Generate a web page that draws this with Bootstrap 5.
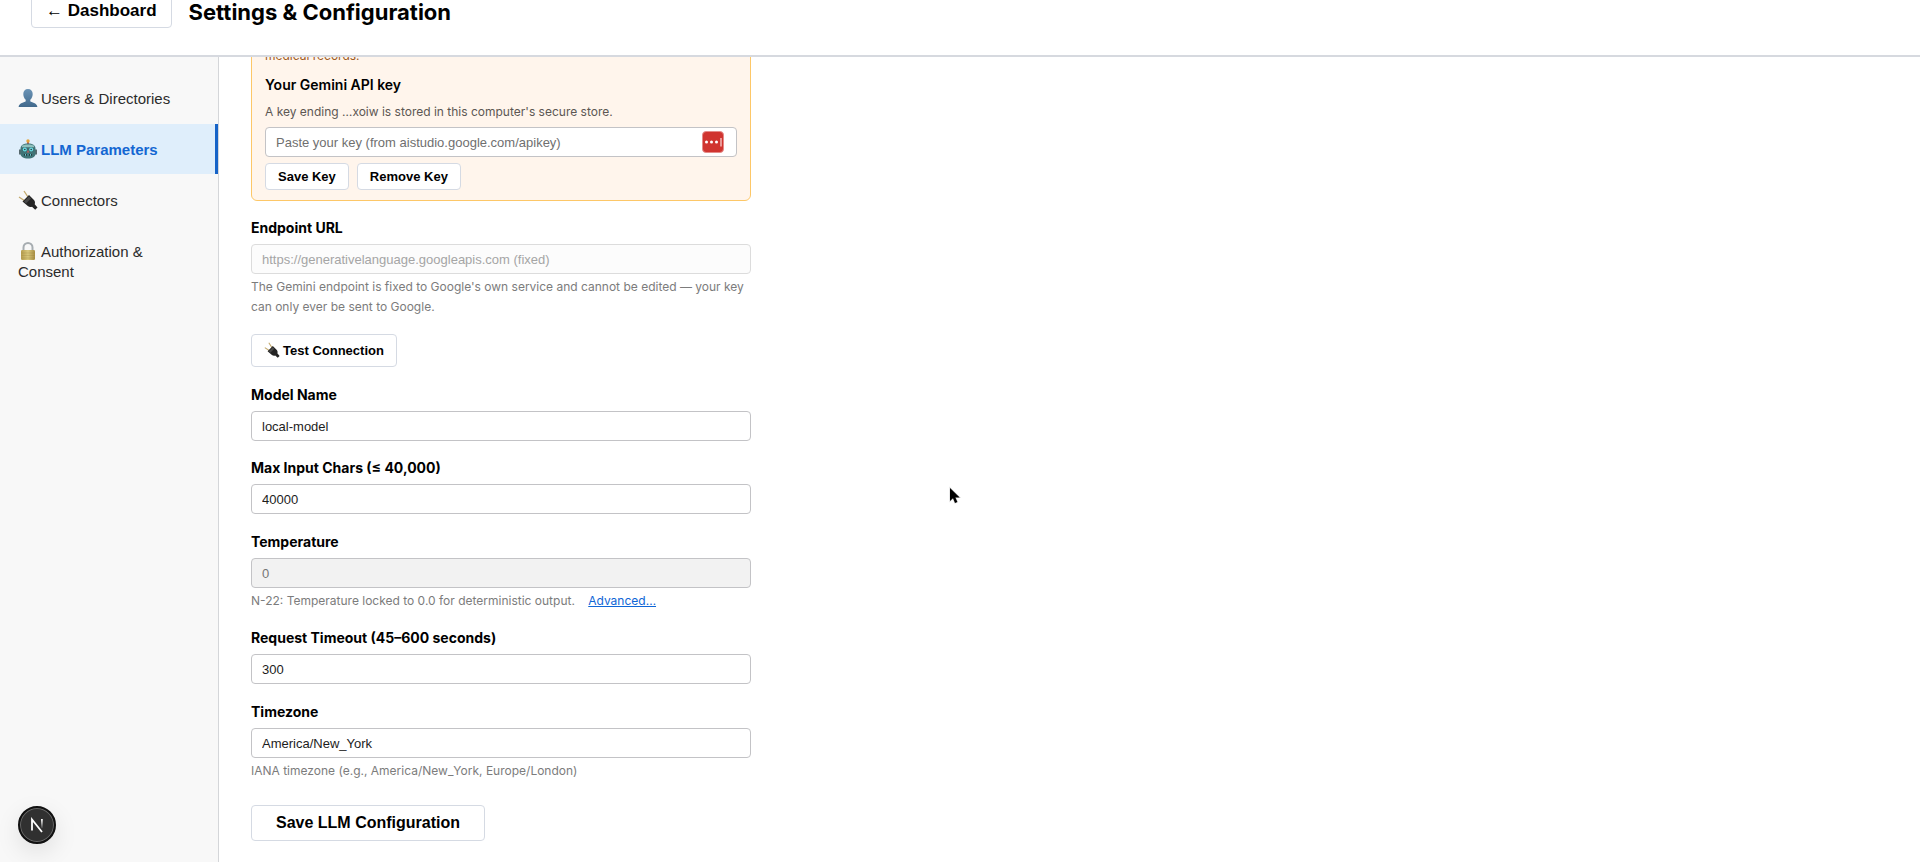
<!DOCTYPE html>
<html lang="en">
<head>
<meta charset="utf-8">
<meta name="viewport" content="width=device-width, initial-scale=1">
<title>Settings &amp; Configuration</title>
<link href="https://cdn.jsdelivr.net/npm/bootstrap@5.3.0/dist/css/bootstrap.min.css" rel="stylesheet">
<style>
  :root { --ui: Inter, "Liberation Sans", sans-serif; --control: "Liberation Sans", Arial, sans-serif; }
  body { font-family: var(--ui); font-size: 12px; line-height: 20px; color: #000; background: #fff; overflow: hidden; }
  .topbar { height: 57px; padding: 0 31px 27px; gap: 17px; border-bottom: 2px solid #d6d9df; z-index: 2; }
  .topbar h1 { font-size: 22px; line-height: 24px; font-weight: 700; margin-bottom: 4px; }
  .btn { --bs-btn-color: #000; --bs-btn-bg: #fff; --bs-btn-border-color: #d5dae3; --bs-btn-border-radius: 4px; --bs-btn-font-weight: 700; --bs-btn-font-family: var(--control); --bs-btn-hover-color: #000; --bs-btn-hover-bg: #f4f5f7; --bs-btn-hover-border-color: #c5cad3; }
  .btn-big { --bs-btn-font-size: 16px; --bs-btn-line-height: 20px; --bs-btn-padding-x: 24px; --bs-btn-padding-y: 7px; }
  .btn-back { --bs-btn-font-size: 17px; --bs-btn-padding-x: 14px; --bs-btn-padding-y: 6px; }
  .btn-key { --bs-btn-font-size: 13px; --bs-btn-line-height: 19px; --bs-btn-padding-x: 12px; --bs-btn-padding-y: 3px; }
  .btn-test { --bs-btn-font-size: 13px; --bs-btn-line-height: 19px; --bs-btn-padding-x: 12px; --bs-btn-padding-y: 6px; }
  .sidebar { width: 219px; padding-top: 16px; gap: 1px; background: #f8f8f8; border-right: 1px solid #d4d6d9; }
  .sidebar .nav-link { font-family: var(--control); font-size: 15px; line-height: 20px; padding: 16px 18px 14px; color: #2b2b2b; border-right: 3px solid transparent; }
  .sidebar .nav-link.active { color: #1467d2; font-weight: 700; background: #dfeefb; border-right-color: #1663c7; }
  .emo { width: 20px; height: 20px; margin: -3px 3px -3px 0; vertical-align: -1px; }
  .btn .emo { width: 16px; height: 16px; vertical-align: 0; }
  .panel { padding-left: 32px; padding-right: 32px; margin-top: -26px; }
  .settings-form { max-width: 500px; }
  .keybox { padding: 14px 13px 10px; background: #fff5ec; border: 1px solid #fdc767; border-radius: 6px; margin-bottom: 17px; }
  .warn { color: #a05a1c; margin-bottom: 9px; }
  .form-label { display: block; font-size: 14px; line-height: 20px; font-weight: 700; margin-bottom: 6px; }
  .keybox .form-label { font-weight: 600; }
  .form-control { font-family: var(--control); font-size: 13px; line-height: 18px; height: 30px; padding: 5px 10px; color: #1c1c1c; border-color: #c3c3c6; border-radius: 4px; }
  .form-control::placeholder { color: #6f6f6f; opacity: 1; }
  .form-control:disabled { background: #f2f2f2; color: #757575; }
  .form-control.fixed-url:disabled { background: #fcfcfc; color: #a5a5a5; border-color: #dcdcdc; }
  .field { margin-bottom: 18px; }
  .field-tight { margin-bottom: 17px; }
  .form-text { font-size: 12px; line-height: 20px; margin-top: 3px; color: #7c7c7c; }
  .form-text a { color: #0f66d6; margin-left: 10px; }
  .stored { color: #5c5753; margin: 7px 0 5px; }
  .keyrow { margin-top: 6px; }
  .save { margin-top: 7px; }
  .pw { right: 13px; top: 4px; width: 22px; height: 22px; }
  .dev { left: 18px; bottom: 18px; width: 38px; height: 38px; border: 2px solid #111; background: #303030; box-shadow: 0 8px 24px rgba(0,0,0,.1), inset 0 0 0 1px #666; z-index: 3; }
  .pointer { left: 948px; top: 486px; z-index: 4; pointer-events: none; }
</style>
</head>
<body>
<svg class="d-none" aria-hidden="true">
  <symbol id="plug" viewBox="0 0 20 20">
    <path d="M1 7l6 4M6 1l4 6" stroke="#c3a96c" stroke-width="1.300"/>
    <path d="M4.500 11.500L11 5l5 5c1.400 1.600 1 3.300.7 4.200l2.800 3.300-2.300 2.200-3.200-2.900c-1.500.5-3 .2-4.500-1z" fill="#242424"/>
    <path d="M6 11.500L11 6.500l2 2-5 5z" fill="#484848"/>
  </symbol>
</svg>
<div class="d-flex flex-column min-vh-100">
  <header class="topbar d-flex align-items-end bg-white position-relative">
    <button type="button" class="btn btn-big btn-back">← Dashboard</button>
    <h1>Settings &amp; Configuration</h1>
  </header>
  <div class="d-flex flex-grow-1">
    <nav class="sidebar nav flex-column flex-nowrap flex-shrink-0" aria-label="Settings sections">
      <a class="nav-link" href="#users"><svg class="emo" viewBox="0 0 20 20"><defs><linearGradient id="person" x2="0" y2="1"><stop stop-color="#6b94b6"/><stop offset="1" stop-color="#41698c"/></linearGradient></defs><path d="M10 1c3 0 4.700 2 4.700 5 0 2.500-1 4.600-2.400 5.700v1.500c1 1.200 6.700 1.300 7.100 5.800H.6c.4-4.500 6.100-4.600 7.100-5.800v-1.500C6.300 10.600 5.300 8.500 5.300 6c0-3 1.700-5 4.700-5z" fill="url(#person)"/></svg>Users &amp; Directories</a>
      <a class="nav-link active" href="#llm" aria-current="page"><svg class="emo" viewBox="0 0 20 20"><path d="M9.200 3h1.600v3H9.200z" fill="#a33"/><circle cx="10" cy="2" r="1.700" fill="#e5a33b"/><path d="M1 10.500h18v5H1z" fill="#56686d"/><path d="M2.500 10c0-4 3-5.500 7.500-5.500s7.500 1.500 7.500 5.500v4.500c0 3.500-3 5-7.500 5s-7.500-1.500-7.500-5z" fill="#3f7477"/><path d="M4 6.500c3-1.500 9-1.500 12 0v2H4z" fill="#8fc0bd"/><path d="M4 8.500h12v4H4z" fill="#426c72"/><circle cx="6.800" cy="10.500" r="2" fill="#66e0e4"/><circle cx="13.200" cy="10.500" r="2" fill="#66e0e4"/><circle cx="6.800" cy="10.500" r=".8" fill="#334"/><circle cx="13.200" cy="10.500" r=".8" fill="#334"/><path d="M10 11l1.200 2.500H8.800z" fill="#c95d59"/><path d="M6 15h8v1.700H6z" fill="#22383d"/><path d="M7.500 15v1.700m2.500-1.700v1.700m2.500-1.700v1.700" stroke="#6edce0" stroke-width=".9"/></svg>LLM Parameters</a>
      <a class="nav-link" href="#connectors"><svg class="emo" viewBox="0 0 20 20"><use href="#plug"/></svg>Connectors</a>
      <a class="nav-link" href="#auth"><svg class="emo" viewBox="0 0 20 20"><defs><linearGradient id="brass"><stop stop-color="#b69d4e"/><stop offset=".5" stop-color="#d8c77c"/><stop offset="1" stop-color="#a88e43"/></linearGradient></defs><path d="M5.500 10V6.500a4.500 4.500 0 0 1 9 0V10" fill="none" stroke="#a7adb1" stroke-width="2"/><rect x="3" y="9" width="14" height="10" rx="1.300" fill="url(#brass)"/><path d="M3.500 12h13m-13 2.500h13m-13 2.500h13" stroke="#8e7837" stroke-opacity=".35" stroke-width=".7"/></svg>Authorization &amp; Consent</a>
    </nav>
    <main class="panel flex-grow-1">
      <form class="settings-form">
        <section class="keybox">
          <p class="warn">medical records.</p>
          <label class="form-label" for="key">Your Gemini API key</label>
          <p class="stored">A key ending …xoiw is stored in this computer's secure store.</p>
          <div class="position-relative">
            <input class="form-control" type="password" id="key" placeholder="Paste your key (from aistudio.google.com/apikey)">
            <svg class="pw position-absolute" viewBox="0 0 22 22" aria-hidden="true"><rect x=".5" y=".5" width="21" height="21" rx="3.500" fill="#d0342f" stroke="#e58b88"/><circle cx="4.500" cy="11" r="1.500" fill="#fff"/><circle cx="9.500" cy="11" r="1.500" fill="#fff"/><circle cx="14.500" cy="11" r="1.500" fill="#fff"/><path d="M19 7v8.500" stroke="#f4bab8" stroke-width="1.500"/></svg>
          </div>
          <div class="d-flex gap-2 keyrow">
            <button type="button" class="btn btn-key">Save Key</button>
            <button type="button" class="btn btn-key">Remove Key</button>
          </div>
        </section>
        <div class="field field-tight">
          <label class="form-label" for="url">Endpoint URL</label>
          <input class="form-control fixed-url" id="url" type="text" value="https://generativelanguage.googleapis.com (fixed)" disabled>
          <div class="form-text">The Gemini endpoint is fixed to Google's own service and cannot be edited — your key can only ever be sent to Google.</div>
        </div>
        <div class="field"><button type="button" class="btn btn-test"><svg class="emo" viewBox="0 0 20 20"><use href="#plug"/></svg>Test Connection</button></div>
        <div class="field field-tight">
          <label class="form-label" for="model">Model Name</label>
          <input class="form-control" id="model" type="text" value="local-model">
        </div>
        <div class="field">
          <label class="form-label" for="chars">Max Input Chars (≤ 40,000)</label>
          <input class="form-control" id="chars" type="text" inputmode="numeric" value="40000">
        </div>
        <div class="field field-tight">
          <label class="form-label" for="temp">Temperature</label>
          <input class="form-control" id="temp" type="text" value="0" disabled>
          <div class="form-text">N-22: Temperature locked to 0.0 for deterministic output. <a href="#advanced">Advanced…</a></div>
        </div>
        <div class="field">
          <label class="form-label" for="timeout">Request Timeout (45–600 seconds)</label>
          <input class="form-control" id="timeout" type="text" inputmode="numeric" value="300">
        </div>
        <div class="field field-tight">
          <label class="form-label" for="tz">Timezone</label>
          <input class="form-control" id="tz" type="text" value="America/New_York">
          <div class="form-text">IANA timezone (e.g., America/New_York, Europe/London)</div>
        </div>
        <button type="button" class="btn btn-big save">Save LLM Configuration</button>
      </form>
    </main>
  </div>
</div>
<button type="button" class="dev position-fixed rounded-circle p-0 d-flex align-items-center justify-content-center" aria-label="Developer tools">
  <svg width="16" height="16" viewBox="0 0 16 16"><defs><linearGradient id="fade" x2="0" y2="1"><stop stop-color="#fff"/><stop offset="1" stop-color="#fff" stop-opacity=".1"/></linearGradient></defs><path d="M3 13.500V2.500L13 15" fill="none" stroke="#fff" stroke-width="1.800"/><path d="M12 2h1.800v9H12z" fill="url(#fade)"/></svg>
</button>
<svg class="pointer position-fixed" width="14" height="20" viewBox="0 0 14 20" aria-hidden="true"><path d="M2 2v13l3-2.800 2 4.800 2.400-1-2-4.600h4.300z" fill="#000" stroke="#ddd" stroke-width="1.200" paint-order="stroke"/></svg>
<script src="https://cdn.jsdelivr.net/npm/bootstrap@5.3.0/dist/js/bootstrap.bundle.min.js"></script>
</body>
</html>
